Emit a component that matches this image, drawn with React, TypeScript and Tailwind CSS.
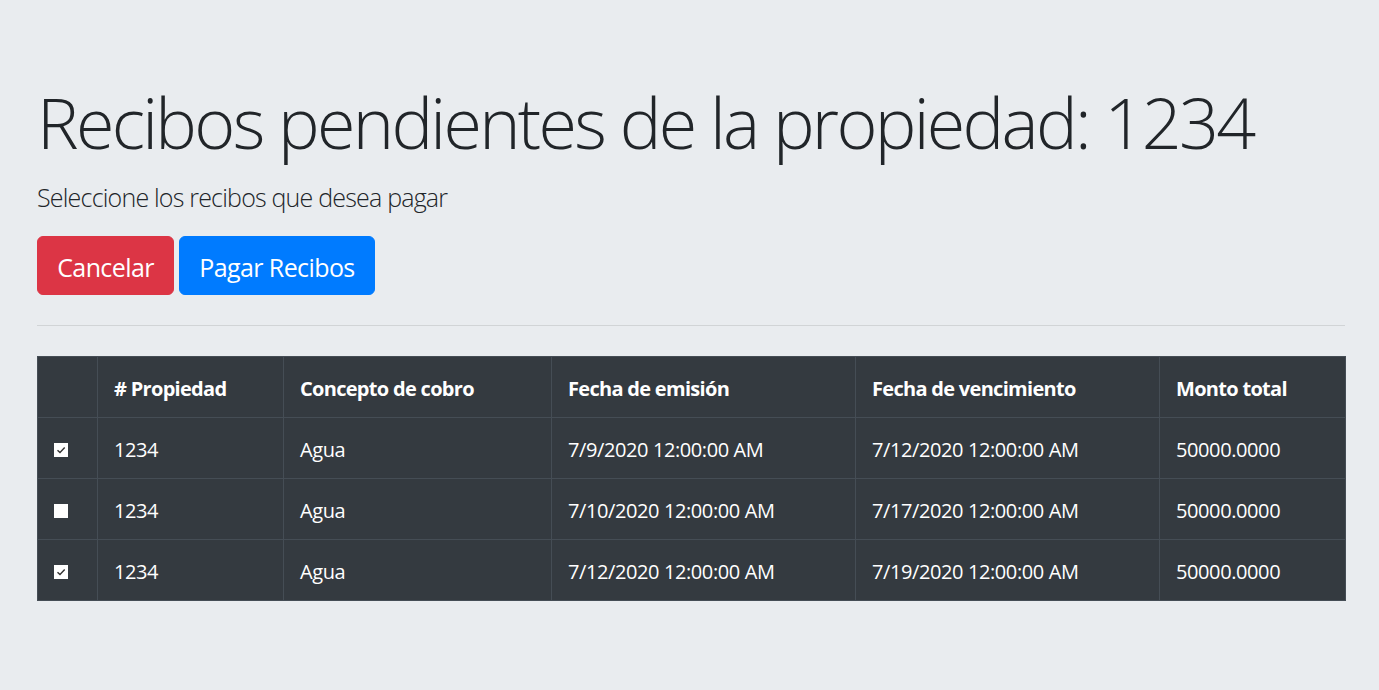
import React from 'react'

interface Recibo {
  id: number
  propiedad: string
  concepto: string
  emision: string
  vencimiento: string
  monto: string
  checked: boolean
}

const RECIBOS: Recibo[] = [
  { id: 1, propiedad: '1234', concepto: 'Agua', emision: '7/9/2020 12:00:00 AM', vencimiento: '7/12/2020 12:00:00 AM', monto: '50000.0000', checked: true },
  { id: 2, propiedad: '1234', concepto: 'Agua', emision: '7/10/2020 12:00:00 AM', vencimiento: '7/17/2020 12:00:00 AM', monto: '50000.0000', checked: false },
  { id: 3, propiedad: '1234', concepto: 'Agua', emision: '7/12/2020 12:00:00 AM', vencimiento: '7/19/2020 12:00:00 AM', monto: '50000.0000', checked: true },
]

const FONT = "font-['Open_Sans','Noto_Sans',sans-serif]"
const CELL = 'border border-[#454d55] px-[16px] pt-[17px] pb-[13px] whitespace-nowrap'

function Check({ checked }: { checked: boolean }) {
  return (
    <span className="inline-flex w-[14px] h-[14px] bg-white items-center justify-center align-middle">
      {checked && (
        <svg width="10" height="10" viewBox="0 0 10 10">
          <path d="M1.5 5.2 L4 7.6 L8.7 2.6" fill="none" stroke="#333" strokeWidth="1.4" />
        </svg>
      )}
    </span>
  )
}

export default function App() {
  return (
    <div className={`min-h-[690px] bg-[#e9ecef] pt-[80px] pl-[37px] pr-[34px] text-[#212529] ${FONT}`}>
      <h1 className="text-[70px] font-light leading-[84px] mb-[15px] tracking-[-2.7px] whitespace-nowrap">
        Recibos pendientes de la propiedad: 1234
      </h1>
      <p className="text-[25px] font-light leading-[37.5px] mb-[19px] tracking-[-0.8px]">
        Seleccione los recibos que desea pagar
      </p>
      <div className="flex gap-[5px]">
        <button className="bg-[#dc3545] text-white text-[25px] leading-[37.5px] pt-[12px] pb-[8px] border border-[#dc3545] rounded-[6px] w-[137px] whitespace-nowrap tracking-[-0.6px]">
          Cancelar
        </button>
        <button className="bg-[#007bff] text-white text-[25px] leading-[37.5px] pt-[12px] pb-[8px] border border-[#007bff] rounded-[6px] w-[196px] whitespace-nowrap tracking-[-0.6px]">
          Pagar Recibos
        </button>
      </div>
      <hr className="my-[30px] border-t border-black/10" />
      <table className="w-[1308px] table-fixed border-collapse bg-[#343a40] text-white text-[20px] leading-[30px] tracking-[-0.4px]">
        <colgroup>
          <col className="w-[60px]" />
          <col className="w-[186px]" />
          <col className="w-[268px]" />
          <col className="w-[304px]" />
          <col className="w-[304px]" />
          <col className="w-[186px]" />
        </colgroup>
        <thead>
          <tr className="tracking-[-0.7px]">
            <th className={CELL}></th>
            <th className={`${CELL} text-left font-bold`}>&#35; Propiedad</th>
            <th className={`${CELL} text-left font-bold`}>Concepto de cobro</th>
            <th className={`${CELL} text-left font-bold`}>Fecha de emisión</th>
            <th className={`${CELL} text-left font-bold`}>Fecha de vencimiento</th>
            <th className={`${CELL} text-left font-bold`}>Monto total</th>
          </tr>
        </thead>
        <tbody>
          {RECIBOS.map(r => (
            <tr key={r.id}>
              <td className="border border-[#454d55] pl-[16px] py-[15px]"><Check checked={r.checked} /></td>
              <td className={CELL}>{r.propiedad}</td>
              <td className={CELL}>{r.concepto}</td>
              <td className={CELL}>{r.emision}</td>
              <td className={CELL}>{r.vencimiento}</td>
              <td className={CELL}>{r.monto}</td>
            </tr>
          ))}
        </tbody>
      </table>
    </div>
  )
}
